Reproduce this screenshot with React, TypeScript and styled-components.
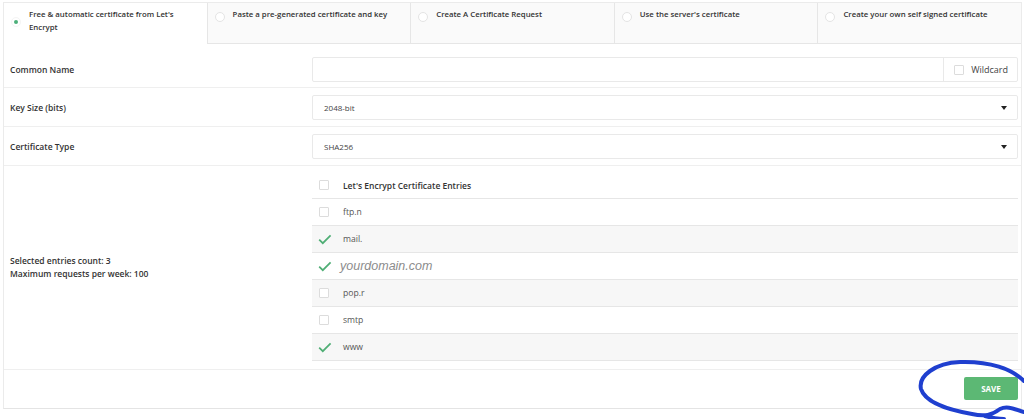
import styled, { createGlobalStyle } from "styled-components";

const GlobalStyle = createGlobalStyle`
  body {
    margin: 0;
    background: #fff;
    font-family: "Open Sans", "Liberation Sans", sans-serif;
    color: #333;
  }
`;

const Page = styled.div`
  position: relative;
  width: 1024px;
  height: 419px;
  padding: 2px 2px 0 3px;
  box-sizing: border-box;
  overflow: hidden;
`;

const Panel = styled.div`
  border: 1px solid #ebebeb;
  border-bottom: 1px solid #e4e4e4;
`;

const Tabs = styled.div`
  display: flex;
  height: 41px;
`;

interface TabProps {
  active?: boolean;
}

const Tab = styled.div<TabProps>`
  flex: 1;
  display: flex;
  align-items: flex-start;
  gap: 8px;
  padding: 5px 8px 0 7px;
  box-sizing: border-box;
  background: ${(p) => (p.active ? "#fff" : "#fafafa")};
  border-bottom: ${(p) => (p.active ? "1px solid transparent" : "1px solid #e6e6e6")};
  & + & {
    border-left: 1px solid #e6e6e6;
  }
`;

const Radio = styled.span<TabProps>`
  flex: none;
  width: 10px;
  height: 10px;
  margin-top: ${(p) => (p.active ? "9px" : "4px")};
  border-radius: 50%;
  border: 1px solid ${(p) => (p.active ? "#f4f4f4" : "#e4e4e4")};
  background: #fff;
  display: flex;
  align-items: center;
  justify-content: center;
  box-sizing: border-box;
  &::after {
    content: "";
    display: ${(p) => (p.active ? "block" : "none")};
    width: 4px;
    height: 4px;
    border-radius: 50%;
    background: #4caf7a;
  }
`;

const TabLabel = styled.span`
  font-size: 7.8px;
  font-weight: 600;
  line-height: 13px;
  color: #333;
`;

interface RowProps {
  first?: boolean;
}

const Row = styled.div<RowProps>`
  display: grid;
  grid-template-columns: 308px 1fr;
  align-items: center;
  padding: ${(p) => (p.first ? "13px 3px 5px 0" : "7px 3px 6px 0")};
  border-bottom: 1px solid #efefef;
`;

const Label = styled.div`
  padding-left: 6px;
  font-size: 8.5px;
  font-weight: 600;
  line-height: 13px;
  color: #333;
`;

const Field = styled.div`
  display: flex;
  align-items: center;
  height: 25px;
  box-sizing: border-box;
  border: 1px solid #e9e9e9;
  border-radius: 2px;
  background: #fff;
`;

const FieldText = styled.span`
  flex: 1;
  padding-left: 11px;
  font-size: 8px;
  color: #444;
`;

const Arrow = styled.span`
  width: 0;
  height: 0;
  margin-right: 10px;
  border-left: 3.5px solid transparent;
  border-right: 3.5px solid transparent;
  border-top: 4px solid #222;
`;

const Addon = styled.div`
  display: flex;
  align-items: center;
  gap: 7px;
  height: 100%;
  padding: 0 9px 0 10px;
  border-left: 1px solid #e9e9e9;
  font-size: 9px;
  color: #444;
`;

const Box = styled.span`
  flex: none;
  width: 10px;
  height: 10px;
  box-sizing: border-box;
  border: 1px solid #dcdcdc;
  border-radius: 1px;
  background: #fff;
`;

const EntriesRow = styled(Row)`
  padding: 6px 3px 8px 0;
`;

const Table = styled.div`
  display: flex;
  flex-direction: column;
`;

interface EntryProps {
  shaded?: boolean;
}

const Entry = styled.div<EntryProps>`
  display: flex;
  align-items: center;
  gap: 14px;
  height: 27px;
  padding-left: 7px;
  box-sizing: border-box;
  background: ${(p) => (p.shaded ? "#f7f7f7" : "#fff")};
  border-bottom: 1px solid #e6e6e6;
`;

const EntryHead = styled.span`
  font-size: 8.5px;
  font-weight: 600;
  color: #333;
`;

const EntryText = styled.span`
  font-size: 8.6px;
  color: #555;
`;

const DomainText = styled.span`
  margin-left: -3px;
  font-family: "Liberation Sans", Arial, sans-serif;
  font-style: italic;
  font-size: 12.5px;
  color: #8c8c8c;
`;

const Check = styled.span`
  flex: none;
  width: 10px;
  height: 10px;
  display: flex;
  align-items: center;
  justify-content: center;
`;

const Footer = styled.div`
  display: flex;
  justify-content: flex-end;
  padding: 7px 3px 8px 0;
`;

const SaveButton = styled.button`
  width: 54px;
  height: 23px;
  border: none;
  border-radius: 2px;
  background: #5cb874;
  color: #fff;
  font-family: "Open Sans", sans-serif;
  font-size: 8px;
  font-weight: 700;
`;

const Scribble = styled.svg`
  position: absolute;
  left: 0;
  top: 0;
  pointer-events: none;
`;

const CheckIcon = () => (
  <svg width="14" height="11" viewBox="0 0 14 11" style={{ marginLeft: 2, flex: "none" }}>
    <path d="M1.2 5.6 L4.8 9.2 L12.6 1.4" fill="none" stroke="#4fae75" strokeWidth="1.7" />
  </svg>
);

const tabs = [
  "Free & automatic certificate from Let's Encrypt",
  "Paste a pre-generated certificate and key",
  "Create A Certificate Request",
  "Use the server's certificate",
  "Create your own self signed certificate",
];

const entries = [
  { name: "ftp.n", checked: false },
  { name: "mail.", checked: true },
  { name: "yourdomain.com", checked: true, domain: true },
  { name: "pop.r", checked: false },
  { name: "smtp", checked: false },
  { name: "www", checked: true },
];

export default function App() {
  return (
    <Page>
      <GlobalStyle />
      <Panel>
        <Tabs>
          {tabs.map((t, i) => (
            <Tab key={t} active={i === 0}>
              <Radio active={i === 0} />
              <TabLabel>
                {i === 0 ? (
                  <>
                    Free &amp; automatic certificate from Let's
                    <br />
                    Encrypt
                  </>
                ) : (
                  t
                )}
              </TabLabel>
            </Tab>
          ))}
        </Tabs>

        <Row first>
          <Label>Common Name</Label>
          <Field>
            <FieldText />
            <Addon>
              <Box />
              Wildcard
            </Addon>
          </Field>
        </Row>
        <Row>
          <Label>Key Size (bits)</Label>
          <Field>
            <FieldText>2048-bit</FieldText>
            <Arrow />
          </Field>
        </Row>
        <Row>
          <Label>Certificate Type</Label>
          <Field>
            <FieldText>SHA256</FieldText>
            <Arrow />
          </Field>
        </Row>

        <EntriesRow>
          <Label>
            Selected entries count: 3
            <br />
            Maximum requests per week: 100
          </Label>
          <Table>
            <Entry>
              <Box />
              <EntryHead>Let's Encrypt Certificate Entries</EntryHead>
            </Entry>
            {entries.map((e, i) => (
              <Entry key={e.name} shaded={i % 2 === 1}>
                {e.checked ? (
                  <Check>
                    <CheckIcon />
                  </Check>
                ) : (
                  <Box />
                )}
                {e.domain ? <DomainText>{e.name}</DomainText> : <EntryText>{e.name}</EntryText>}
              </Entry>
            ))}
          </Table>
        </EntriesRow>

        <Footer>
          <SaveButton>SAVE</SaveButton>
        </Footer>
      </Panel>

      <Scribble width="1024" height="419" viewBox="0 0 1024 419">
        <path
          d="M1024 381 C1012 369 990 361 960 362 C935 363 918 376 921 389 C925 402 948 410 972 414 C985 417 992 415 1000 409 C1008 405 1016 410 1024 412 M985 416 C992 418 998 419 1004 419"
          fill="none"
          stroke="#1f3fcf"
          strokeWidth="4"
          strokeLinecap="round"
          strokeLinejoin="round"
        />
      </Scribble>
    </Page>
  );
}
